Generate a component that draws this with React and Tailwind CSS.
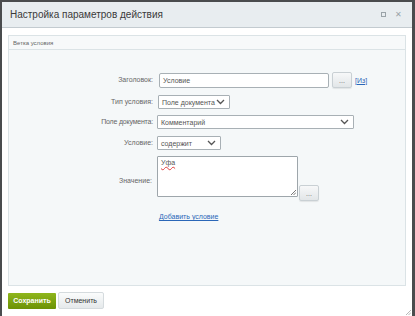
import React from "react";

function Chevron({ className = "" }) {
  return (
    <svg width="9" height="6" viewBox="0 0 9 6" className={className}>
      <path d="M1 1 L4.5 4.5 L8 1" fill="none" stroke="#555" strokeWidth="1.3" />
    </svg>
  );
}

function Select({ w, text }) {
  return (
    <div
      className="flex items-center justify-between h-[14px] border border-[#a8b0b5] bg-white pl-[3px] pr-[4px] rounded-[1px]"
      style={{ width: w }}
    >
      <span className="text-[7px] text-[#555] leading-none">{text}</span>
      <Chevron />
    </div>
  );
}

function DotsBtn() {
  return (
    <div className="w-[20px] h-[16px] rounded-[2px] border border-[#c9d0d4] bg-gradient-to-b from-[#f7f8f9] to-[#e2e6e8] flex items-center justify-center text-[7px] text-[#666] leading-none shadow-[0_1px_1px_rgba(0,0,0,0.08)]">
      ...
    </div>
  );
}

export default function App() {
  return (
    <div
      className="w-[415px] h-[316px] bg-[#4a4c4e] overflow-hidden pt-[2px] px-[2px]"
      style={{ fontFamily: '"Liberation Sans", Arial, sans-serif' }}
    >
      <div className="relative w-[410px] h-[314px] bg-white flex flex-col">
        {/* Title bar */}
        <div className="h-[26px] shrink-0 bg-[#e8edf0] border-b border-[#c3cbd0] flex items-center pl-[8px] pr-[10px]">
          <span className="text-[10px] text-[#3a3a3a] flex-1">Настройка параметров действия</span>
          <div className="w-[5px] h-[5px] border border-[#9aa3a8] mr-[9px]" />
          <span className="text-[8px] text-[#9aa3a8] leading-none">✕</span>
        </div>

        {/* Content */}
        <div className="px-[6px] pt-[7px]">
          <div className="h-[251px] border border-[#dbe3e6] bg-[#f5f8f9] flex flex-col">
            <div className="h-[14px] shrink-0 border-b border-[#dbe3e6] bg-[#f7f9fa] flex items-center pl-[4px]">
              <span className="text-[6px] text-[#666] leading-none">Ветка условия</span>
            </div>
            <div className="pt-[22px] flex flex-col">
              {/* Row 1 */}
              <div className="flex items-center h-[16px]">
                <div className="w-[148px] text-right pr-[4px] text-[7px] text-[#666]">Заголовок:</div>
                <div className="w-[170px] h-[15px] ml-[2px] border border-[#a8b0b5] bg-white rounded-[2px] flex items-center pl-[3px]">
                  <span className="text-[7px] text-[#555] leading-none">Условие</span>
                </div>
                <div className="ml-[3px]">
                  <DotsBtn />
                </div>
                <span className="ml-[3px] text-[7px] text-[#2a67b8] underline leading-none">[Из]</span>
              </div>
              {/* Row 2 */}
              <div className="flex items-center h-[14px] mt-[7px]">
                <div className="w-[148px] text-right pr-[4px] text-[7px] text-[#666]">Тип условия:</div>
                <div className="ml-[1px]">
                  <Select w={72} text="Поле документа" />
                </div>
              </div>
              {/* Row 3 */}
              <div className="flex items-center h-[14px] mt-[6px]">
                <div className="w-[148px] text-right pr-[4px] text-[7px] tracking-[-0.2px] text-[#666]">Поле документа:</div>
                <Select w={197} text="Комментарий" />
              </div>
              {/* Row 4 */}
              <div className="flex items-center h-[14px] mt-[7px]">
                <div className="w-[148px] text-right pr-[4px] text-[7px] text-[#666]">Условие:</div>
                <Select w={64} text="содержит" />
              </div>
              {/* Row 5 */}
              <div className="flex mt-[6px]">
                <div className="w-[148px] text-right pr-[5px] text-[7px] leading-none text-[#666] pt-[21px]">Значение:</div>
                <div className="relative w-[141px] h-[41px] border border-[#9ea6ab] bg-white rounded-[1px] pl-[3px] pt-[2px] text-[7px] leading-none">
                  <span className="text-[7px] text-[#555] leading-none underline decoration-wavy decoration-[#e04040] decoration-[0.5px] underline-offset-[1px]">Уфа</span>
                  <svg width="6" height="6" viewBox="0 0 6 6" className="absolute right-[1px] bottom-[1px]">
                    <path d="M1 6 L6 1 M3.5 6 L6 3.5" stroke="#555" strokeWidth="0.8" />
                  </svg>
                </div>
                <div className="mt-[29px] ml-[1px]">
                  <DotsBtn />
                </div>
              </div>
              {/* Link */}
              <div className="flex mt-[12px]">
                <div className="w-[150px]" />
                <span className="text-[7px] text-[#2a67b8] underline leading-none">Добавить условие</span>
              </div>
            </div>
          </div>
        </div>

        {/* Buttons */}
        <div className="flex items-center px-[6px] mt-[6px] gap-[2px]">
          <div className="w-[48px] h-[16px] rounded-[1px] bg-gradient-to-b from-[#8fb61b] to-[#6c9205] flex items-center justify-center">
            <span className="text-[7px] font-bold text-white leading-none">Сохранить</span>
          </div>
          <div className="w-[46px] h-[17px] rounded-[2px] border border-[#d5dbde] bg-gradient-to-b from-[#fbfcfc] to-[#e5e9eb] flex items-center justify-center">
            <span className="text-[7px] text-[#333] leading-none">Отменить</span>
          </div>
        </div>

        <svg width="5" height="5" viewBox="0 0 5 5" className="absolute right-[1px] bottom-[1px]">
          <path d="M0 5 L5 0 M2.5 5 L5 2.5" stroke="#999" strokeWidth="0.7" />
        </svg>
      </div>
    </div>
  );
}
